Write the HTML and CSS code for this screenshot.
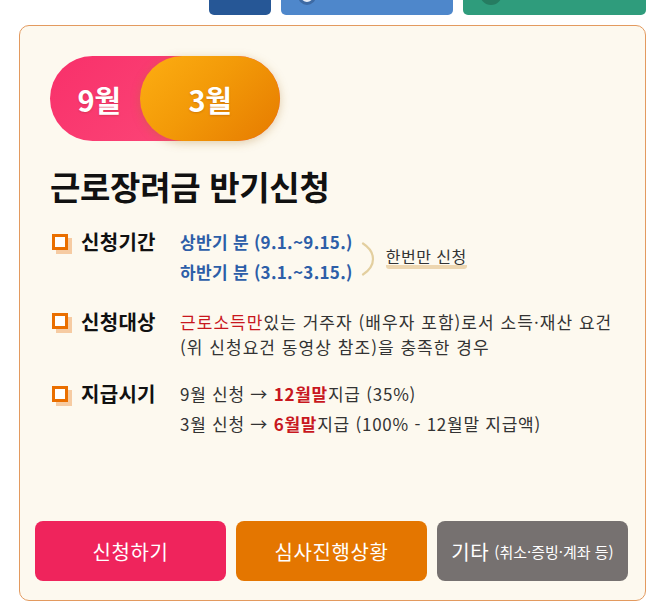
FILE: index.html
```html
<!DOCTYPE html>
<html lang="ko">
<head>
<meta charset="utf-8">
<link rel="stylesheet" href="styles.css">
</head>
<body>
<div class="wrap">
  <div class="topbar">
    <div class="tb tb-navy"></div>
    <div class="tb tb-blue"><span class="tb-dot dot-blue"></span></div>
    <div class="tb tb-green"><span class="tb-dot dot-green"></span></div>
  </div>
  <div class="card">
    <div class="content">
      <div class="toggle">
        <div class="m9">9월</div>
        <div class="m3">3월</div>
      </div>
      <h1 class="title">근로장려금 반기신청</h1>

      <div class="row row-tall">
        <span class="ico"></span>
        <div class="label">신청기간</div>
        <div class="val period">
          <div class="lines">
            <div class="blue">상반기 분 (9.1.~9.15.)</div>
            <div class="blue">하반기 분 (3.1.~3.15.)</div>
          </div>
          <svg class="brace" width="14" height="34" viewBox="0 0 14 34"><path d="M2 1.5 Q12 8 12 17 Q12 26 2 32.5" fill="none" stroke="#e3cf9f" stroke-width="2.2" stroke-linecap="round"/></svg>
          <span class="once">한번만 신청</span>
        </div>
      </div>

      <div class="row row-wrap">
        <span class="ico"></span>
        <div class="label">신청대상</div>
        <div class="val"><span class="red">근로소득만</span>있는 거주자 (배우자 포함)로서 소득·재산 요건<br>(위 신청요건 동영상 참조)을 충족한 경우</div>
      </div>

      <div class="row row-tall">
        <span class="ico"></span>
        <div class="label">지급시기</div>
        <div class="val pay">
          <div>9월 신청 → <b class="red">12월말</b>지급 (35%)</div>
          <div>3월 신청 → <b class="red">6월말</b>지급 (100% - 12월말 지급액)</div>
        </div>
      </div>
    </div>

    <div class="actions">
      <a class="btn btn-pink">신청하기</a>
      <a class="btn btn-orange">심사진행상황</a>
      <a class="btn btn-gray">기타 <small>(취소·증빙·계좌 등)</small></a>
    </div>
  </div>
</div>
</body>
</html>
```

FILE: styles.css
```css
* { box-sizing: border-box; }
html, body { margin: 0; padding: 0; background: #ffffff; }
body {
  font-family: "Noto Sans CJK KR", "Noto Sans", sans-serif;
  color: #222;
}
.wrap {
  width: 627px;
  margin-left: 19px;
}
.topbar {
  display: flex;
  justify-content: flex-end;
  gap: 10px;
  height: 15px;
  margin-bottom: 10px;
}
.tb {
  position: relative;
  height: 15px;
  border-radius: 0 0 5px 5px;
  overflow: hidden;
}
.tb-navy { width: 62px; background: #265796; }
.tb-blue { width: 172px; background: #4e87cb; }
.tb-green { width: 183px; background: #2f9c7c; }
.tb-dot {
  position: absolute;
  width: 18px;
  height: 18px;
  border-radius: 50%;
  top: -13px;
}
.dot-blue { left: 17px; background: #e8eef7; border: 3px solid #3d6aa4; }
.dot-green { left: 17px; width: 22px; height: 22px; top: -17px; background: #267c61; }

.card {
  height: 576px;
  border: 1px solid #e39a5f;
  border-radius: 10px;
  background: #fdf9ef;
  padding: 30px 17px 19px 15px;
  display: flex;
  flex-direction: column;
}
.content { padding-left: 15px; }

.toggle {
  display: flex;
  width: 230px;
  height: 85px;
  border-radius: 43px;
  background: linear-gradient(135deg, #f8306a 0%, #fd4f7d 100%);
}
.m9, .m3 {
  display: flex;
  align-items: center;
  justify-content: center;
  color: #fff;
  font-weight: 700;
  font-size: 29px;
  letter-spacing: -0.5px;
  text-shadow: 0 1px 2px rgba(120, 40, 0, 0.25);
}
.m9 { width: 90px; padding-left: 8px; }
.m3 {
  width: 140px;
  border-radius: 43px;
  background: linear-gradient(135deg, #fdae12 0%, #f39a08 45%, #e67b00 100%);
  box-shadow: 0 2px 10px rgba(170, 120, 40, 0.35);
}

.title {
  margin: 24px 0 20px 0;
  font-size: 33px;
  line-height: 42px;
  font-weight: 700;
  color: #111;
  letter-spacing: -0.3px;
}

.row {
  display: grid;
  grid-template-columns: 31px 99px 1fr;
  align-items: start;
  margin-bottom: 22px;
}
.row-tall { line-height: 30px; }
.row-wrap { line-height: 25px; margin-bottom: 20px; }
.ico {
  position: relative;
  width: 16px;
  height: 16px;
  margin-left: 2px;
  border: 3px solid #ea6f00;
  background: #fff;
  box-shadow: 4px 4px 0 #f6cba2;
}
.row-tall .ico { margin-top: 7px; }
.row-wrap .ico { margin-top: 4px; }
.label {
  font-size: 20px;
  font-weight: 700;
  color: #111;
  letter-spacing: 0.3px;
}
.val {
  font-size: 17px;
  color: #333;
  letter-spacing: 1.05px;
  white-space: nowrap;
}
.val.pay { letter-spacing: 0.75px; }
.period { display: flex; align-items: center; }
.blue { color: #2d5ea8; font-weight: 700; font-size: 17px; letter-spacing: 0.3px; }
.brace { margin: 4px 0 0 8px; }
.once {
  margin-left: 11px;
  margin-top: 2px;
  font-size: 16px;
  line-height: 18px;
  color: #333;
  letter-spacing: 0.5px;
  border-bottom: 4px solid #edd6b0;
  border-radius: 3px;
}
.red { color: #c8171e; }
b.red { font-weight: 700; }

.actions {
  margin-top: auto;
  display: flex;
  gap: 10px;
}
.btn {
  width: 191px;
  height: 60px;
  border-radius: 8px;
  display: flex;
  align-items: center;
  justify-content: center;
  color: #fff;
  font-size: 20px;
  text-decoration: none;
  letter-spacing: 0.6px;
}
.btn-pink { background: #ef245c; }
.btn-orange { background: #e47600; }
.btn-gray { background: #767170; }
.btn small { font-size: 15px; margin-left: 5px; letter-spacing: 0; }
```
